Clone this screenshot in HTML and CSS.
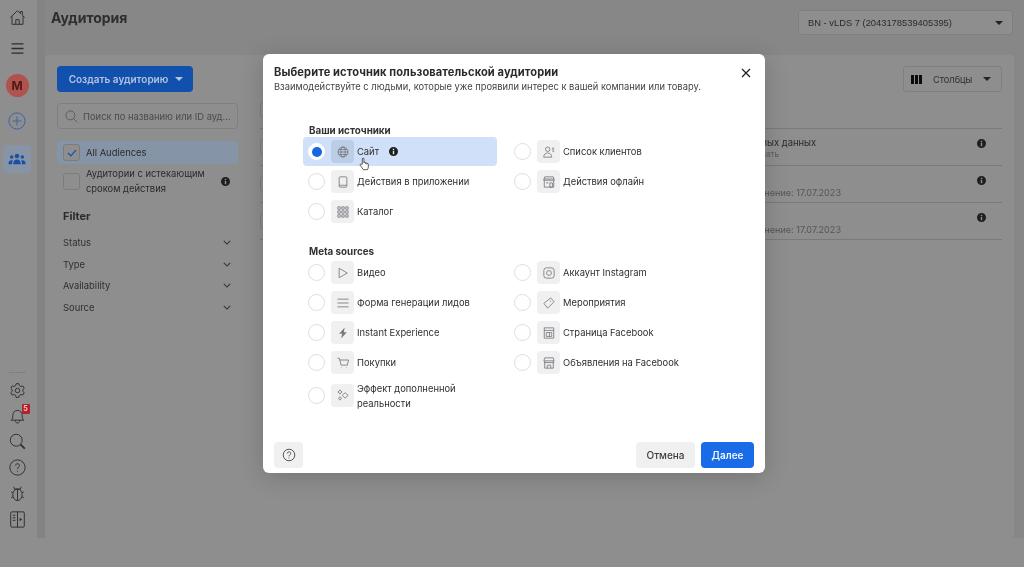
FILE: index.html
```html
<!DOCTYPE html>
<html lang="ru">
<head>
<meta charset="utf-8">
<title>Аудитория</title>
<link rel="stylesheet" href="styles.css">
</head>
<body>
<div class="page">
  <nav class="rail">
    <svg class="rail-icon" viewBox="0 0 20 20"><path d="M1.500 10 10 2l3.500 3.300V3h2.200v4.400L18.500 10M3.500 8.500V18h13V8.500M8 18v-5.500h4V18"/></svg>
    <svg class="rail-icon burger" viewBox="0 0 20 20"><path d="M3 4.500h14M3 10h14M3 15.500h14"/></svg>
    <div class="avatar">M</div>
    <svg class="rail-icon plus" viewBox="0 0 20 20"><circle cx="10" cy="10" r="9"/><path d="M10 5v10M5 10h10"/></svg>
    <div class="rail-tile">
      <svg viewBox="0 0 20 14" class="people"><circle cx="10" cy="3.500" r="2.600"/><circle cx="3.800" cy="4.600" r="2"/><circle cx="16.200" cy="4.600" r="2"/><path d="M5.600 13c0-3.400 1.600-5.400 4.400-5.400s4.400 2 4.400 5.400zM0 13c0-3 1.200-4.600 3.800-4.600.6 0 1 .1 1.400.3C4.400 9.800 4.200 11.200 4.200 13zM20 13c0-3-1.200-4.600-3.800-4.600-.6 0-1 .1-1.400.3.8 1.100 1 2.500 1 4.300z"/></svg>
    </div>
    <div class="rail-bottom">
      <div class="rail-rule"></div>
      <svg class="rail-icon" viewBox="0 0 20 20"><path d="M8.300 2h3.400l.5 2.300 1.700 1 2.300-.7 1.700 2.900-1.700 1.600v1.800l1.700 1.600-1.700 2.900-2.300-.7-1.700 1-.5 2.300H8.300l-.5-2.300-1.700-1-2.300.7-1.700-2.900 1.700-1.600V9.100L2.100 7.500l1.700-2.900 2.300.7 1.700-1z"/><circle cx="10" cy="10" r="2.600"/></svg>
      <div class="bell">
        <svg class="rail-icon" viewBox="0 0 20 20"><path d="M2.500 15.500c1.500-1.200 2-2.500 2-5.500 0-3.600 2.200-6 5.500-6s5.500 2.400 5.500 6c0 3 .5 4.300 2 5.500zM7.500 15.800c0 4 5 4 5 0"/></svg>
        <span class="badge">5</span>
      </div>
      <svg class="rail-icon" viewBox="0 0 20 20"><circle cx="8.500" cy="8.500" r="7"/><path d="m13.500 13.500 5 5" class="thick"/></svg>
      <svg class="rail-icon" viewBox="0 0 20 20"><circle cx="10" cy="10" r="9"/><path d="M7.800 7.800c0-3 4.500-3 4.500 0 0 1.800-2.300 1.800-2.300 4M10 13.800v1"/></svg>
      <svg class="rail-icon" viewBox="0 0 20 20"><ellipse cx="10" cy="11.500" rx="5.500" ry="6.800"/><path d="M10 4.700v13.600M7 5.500 5.500 2M13 5.500 14.500 2M4.500 9 2.500 8M15.500 9l2-1M4.500 14l-2 1M15.500 14l2 1M6.500 4.800h7"/></svg>
      <svg class="rail-icon" viewBox="0 0 20 20"><rect x="2" y="1" width="16" height="18" rx="1.500"/><path d="M10 1v18M4.500 5h3M4.500 8h3M4.500 11h3"/><path class="solid" d="m12.500 8 3 2-3 2z"/></svg>
    </div>
  </nav>
  <div class="gutter"></div>
  <main class="main">
    <header class="top">
      <h1 class="page-title">Аудитория</h1>
      <div class="account">BN - vLDS 7 (2043178539405395)<span class="caret"></span></div>
    </header>
    <section class="card">
      <aside class="filters">
        <div class="create">Создать аудиторию<span class="caret light"></span></div>
        <div class="search">
          <svg viewBox="0 0 14 14" class="search-ico"><circle cx="5.800" cy="5.800" r="4.800"/><path d="m9.300 9.300 4 4"/></svg>
          <span>Поиск по названию или ID ауд...</span>
        </div>
        <div class="check-row selected">
          <span class="box"><svg viewBox="0 0 12 10"><path d="m1 5 3.500 3.500L11 1.500"/></svg></span>
          <span>All Audiences</span>
        </div>
        <div class="check-row expiring">
          <span class="box"></span>
          <span class="grow">Аудитории с истекающим сроком действия</span>
          <svg class="info" viewBox="0 0 10 10"><use href="#info"/></svg>
        </div>
        <h2 class="filter-head">Filter</h2>
        <div class="filter-row">Status<svg class="chev" viewBox="0 0 10 6"><path d="m1 1 4 4 4-4"/></svg></div>
        <div class="filter-row">Type<svg class="chev" viewBox="0 0 10 6"><path d="m1 1 4 4 4-4"/></svg></div>
        <div class="filter-row">Availability<svg class="chev" viewBox="0 0 10 6"><path d="m1 1 4 4 4-4"/></svg></div>
        <div class="filter-row">Source<svg class="chev" viewBox="0 0 10 6"><path d="m1 1 4 4 4-4"/></svg></div>
      </aside>
      <div class="table-side">
        <div class="toolbar">
          <div class="columns">
            <span class="col-bars"><i></i><i></i><i></i></span>
            <span class="col-label">Столбцы</span>
            <span class="caret"></span>
          </div>
        </div>
        <div class="head-row"><span class="tick"></span></div>
        <div class="t-row">
          <span class="tick"></span>
          <div class="t-text first"><b>Ожидание новых данных</b><small>Будет использовать</small></div>
          <svg class="info" viewBox="0 0 10 10"><use href="#info"/></svg>
        </div>
        <div class="t-row">
          <span class="tick"></span>
          <div class="t-text"><b>&nbsp;</b><span>Последнее изменение: 17.07.2023</span></div>
          <svg class="info" viewBox="0 0 10 10"><use href="#info"/></svg>
        </div>
        <div class="t-row">
          <span class="tick"></span>
          <div class="t-text"><b>&nbsp;</b><span>Последнее изменение: 17.07.2023</span></div>
          <svg class="info" viewBox="0 0 10 10"><use href="#info"/></svg>
        </div>
      </div>
    </section>
  </main>
</div>

<div class="modal" role="dialog">
  <header class="modal-head">
    <div>
      <h2 class="modal-title">Выберите источник пользовательской аудитории</h2>
      <p class="modal-sub">Взаимодействуйте с людьми, которые уже проявили интерес к вашей компании или товару.</p>
    </div>
    <svg class="close" viewBox="0 0 10 10"><path d="m1 1 8 8M9 1 1 9"/></svg>
  </header>
  <div class="modal-body">
    <h3 class="group-label">Ваши источники</h3>
    <div class="src-grid">
      <div class="src active">
        <span class="radio on"></span>
        <span class="tile"><svg viewBox="0 0 14 14"><circle cx="7" cy="7" r="5.800"/><ellipse cx="7" cy="7" rx="2.600" ry="5.800"/><path d="M1.200 7h11.600M2.200 4h9.600M2.200 10h9.600"/></svg></span>
        <span class="src-name">Сайт</span>
        <svg class="info" viewBox="0 0 10 10"><use href="#info"/></svg>
        <svg class="hand" viewBox="0 0 12 15"><path d="M3.600 7.800V2c0-1.300 1.800-1.300 1.800 0v4.200c0-1 1.700-1 1.700 0v.8c0-1 1.600-1 1.600 0v.7c0-.8 1.500-.8 1.500.2v2.800c0 1.300-.6 2-1 3H4.800c-.6-1.500-2.400-2.800-3.400-4.700-.6-1.100.6-1.900 1.400-1z"/></svg>
      </div>
      <div class="src">
        <span class="radio"></span>
        <span class="tile"><svg viewBox="0 0 14 14"><circle cx="5.500" cy="3.800" r="2.600"/><path d="M.8 13c0-6.500 9.400-6.500 9.400 0zM10.500 2.500h2.500M10.500 4.500h2.500M11.200 6.500H13"/></svg></span>
        <span class="src-name">Список клиентов</span>
      </div>
      <div class="src">
        <span class="radio"></span>
        <span class="tile"><svg viewBox="0 0 14 14"><rect x="2.500" y="1" width="9" height="12" rx="1.200"/><path d="M2.500 10.800h9"/></svg></span>
        <span class="src-name">Действия в приложении</span>
      </div>
      <div class="src">
        <span class="radio"></span>
        <span class="tile"><svg viewBox="0 0 14 14"><path d="M2 1h10l1.200 4H.8zM1.500 5v8h11V5M1 3.500h12M8 8h3v5H8zM3.500 8h3"/></svg></span>
        <span class="src-name">Действия офлайн</span>
      </div>
      <div class="src">
        <span class="radio"></span>
        <span class="tile"><svg viewBox="0 0 14 14"><path d="M1 1h2.800v2.800H1zM5.600 1h2.800v2.800H5.600zM10.200 1H13v2.800h-2.800zM1 5.600h2.800v2.800H1zM5.600 5.600h2.800v2.800H5.600zM10.200 5.600H13v2.800h-2.800zM1 10.200h2.800V13H1zM5.600 10.200h2.800V13H5.600zM10.200 10.200H13V13h-2.800z"/></svg></span>
        <span class="src-name">Каталог</span>
      </div>
    </div>
    <h3 class="group-label second">Meta sources</h3>
    <div class="src-grid">
      <div class="src">
        <span class="radio"></span>
        <span class="tile"><svg viewBox="0 0 14 14"><path d="M2.500 1.500v11l9.500-5.500z"/></svg></span>
        <span class="src-name">Видео</span>
      </div>
      <div class="src">
        <span class="radio"></span>
        <span class="tile"><svg viewBox="0 0 14 14"><rect x="1" y="1" width="12" height="12" rx="3"/><circle cx="7" cy="7" r="2.800"/><path d="M10.300 3.400v.3"/></svg></span>
        <span class="src-name">Аккаунт Instagram</span>
      </div>
      <div class="src">
        <span class="radio"></span>
        <span class="tile"><svg viewBox="0 0 14 14"><path d="M.5 2.500h13M.5 7h13M.5 11.500h13"/></svg></span>
        <span class="src-name">Форма генерации лидов</span>
      </div>
      <div class="src">
        <span class="radio"></span>
        <span class="tile"><svg viewBox="0 0 14 14"><path d="M9 1 1 7.500 5.500 13 13 5.500zM8 4l1.500 1.500"/></svg></span>
        <span class="src-name">Мероприятия</span>
      </div>
      <div class="src">
        <span class="radio"></span>
        <span class="tile"><svg viewBox="0 0 14 14" class="solid-ico"><path d="M9 .5 2.500 7.800h3.500L4.800 13.500 11.500 6H8z"/></svg></span>
        <span class="src-name">Instant Experience</span>
      </div>
      <div class="src">
        <span class="radio"></span>
        <span class="tile"><svg viewBox="0 0 14 14"><path d="M1.500 1h11v12h-11zM1.500 4h11M3.800 6.500h6.400v4.500H3.800zM7.500 6.500V11"/></svg></span>
        <span class="src-name">Страница Facebook</span>
      </div>
      <div class="src">
        <span class="radio"></span>
        <span class="tile"><svg viewBox="0 0 14 14"><path d="M.5 1.500h2.300l2 8h7.200l1.500-6H3.200M5.200 12.500h.6M11 12.500h.6"/></svg></span>
        <span class="src-name">Покупки</span>
      </div>
      <div class="src">
        <span class="radio"></span>
        <span class="tile"><svg viewBox="0 0 14 14"><path d="M2 1h10l1 3.500H1zM2 4.500V13h10V4.500M1 6.500h12M5 13V9.500h4V13"/></svg></span>
        <span class="src-name">Объявления на Facebook</span>
      </div>
      <div class="src tall">
        <span class="radio"></span>
        <span class="tile"><svg viewBox="0 0 14 14"><path d="M9.500 4.300 13 7.500l-3.500 3.200L6 7.500zM3.500 1l1 1.500L6 3.500 4.500 4.500l-1 1.500-1-1.500L1 3.500l1.500-1zM3.500 9l.8 1.200 1.200.8-1.200.8-.8 1.200-.8-1.200-1.200-.8 1.200-.8z"/></svg></span>
        <span class="src-name">Эффект дополненной реальности</span>
      </div>
    </div>
  </div>
  <footer class="modal-foot">
    <button class="btn square" aria-label="Справка"><svg viewBox="0 0 14 14"><circle cx="7" cy="7" r="5.800"/><path d="M5.300 5.500c0-2.200 3.400-2.200 3.400 0 0 1.300-1.700 1.300-1.700 2.800M7 9.600v.8"/></svg></button>
    <button class="btn cancel">Отмена</button>
    <button class="btn next">Далее</button>
  </footer>
</div>

<svg class="defs" width="0" height="0" aria-hidden="true">
  <symbol id="info" viewBox="0 0 10 10">
    <path fill-rule="evenodd" d="M5 0a5 5 0 1 1 0 10A5 5 0 0 1 5 0zM4.200 2v1.500h1.600V2zM4.200 4.500V8h1.600V4.500z"/>
  </symbol>
</svg>
</body>
</html>
```

FILE: styles.css
```css
* { box-sizing: border-box; }
html, body { margin: 0; height: 100%; }
body {
  width: 1024px;
  height: 567px;
  overflow: hidden;
  position: relative;
  background: #8e8e8e;
  font-family: "Inter", "Liberation Sans", sans-serif;
  color: #2a2a2a;
  font-size: 9.400px;
}
svg { display: block; }
.defs { position: absolute; }

/* Dimmed page behind the dialog */
.page { display: flex; height: 538px; filter: blur(.45px); }

.rail {
  width: 37px;
  height: 100%;
  background: #8e8e8e;
  display: flex;
  flex-direction: column;
  align-items: center;
  padding: 8.500px 3px 0 0;
  flex: none;
}
.rail-icon {
  width: 17px;
  height: 17px;
  fill: none;
  stroke: #2d2d2d;
  stroke-width: 1.100;
  flex: none;
}
.rail-icon .thick { stroke-width: 2; }
.rail-icon .solid { fill: #2d2d2d; stroke: none; }
.burger { margin-top: 14px; stroke-width: 1.500; }
.avatar {
  width: 23px;
  height: 23px;
  margin-top: 17px;
  border-radius: 50%;
  background: #b0524e;
  color: #4d1a18;
  font: 700 12px/23px "Inter", sans-serif;
  text-align: center;
  flex: none;
}
.plus { width: 18px; height: 18px; margin-top: 15.500px; stroke: #3f63a8; }
.rail-tile {
  width: 28px;
  height: 28px;
  margin-top: 15px;
  border-radius: 4px;
  background: #8794a5;
  display: flex;
  align-items: center;
  justify-content: center;
  flex: none;
}
.people { width: 18px; height: 12px; fill: #1a4ea6; }
.rail-bottom {
  margin-top: auto;
  display: flex;
  flex-direction: column;
  align-items: center;
  gap: 8.800px;
  padding-bottom: 10.500px;
}
.rail-rule { width: 17px; height: 1px; background: #7f7f7f; }
.bell { position: relative; }
.badge {
  position: absolute;
  right: -4px;
  top: -3px;
  width: 8px;
  height: 10px;
  background: #b3222a;
  border-radius: 1px;
  color: #e6c9c9;
  font: 700 7px/10px "Inter", sans-serif;
  text-align: center;
}

.gutter { width: 8px; flex: none; background: #838383; }

.main { width: 979px; flex: none; background: #878787; display: flex; flex-direction: column; }
.top {
  height: 55px;
  flex: none;
  display: flex;
  justify-content: space-between;
  align-items: flex-start;
  padding: 9px 11px 0 6px;
}
.page-title { margin: 0; font-size: 14px; line-height: 17px; font-weight: 700; color: #2e2e2e; }
.account {
  width: 215px;
  height: 25px;
  margin-top: 1px;
  background: #8e8e8e;
  border: 1px solid #7f7f7f;
  border-radius: 3px;
  display: flex;
  align-items: center;
  justify-content: space-between;
  padding: 0 9px 0 9px;
  font-family: "Liberation Sans", sans-serif;
  font-size: 9.350px;
  color: #2b2b2b;
}
.caret {
  width: 0;
  height: 0;
  border-left: 4px solid transparent;
  border-right: 4px solid transparent;
  border-top: 4.500px solid #222;
  flex: none;
}
.caret.light { border-top-color: #b6c6df; margin-left: 7px; }

.card {
  width: 969px;
  height: 483px;
  background: #8e8e8e;
  border-radius: 3px;
  display: flex;
  padding: 11px 12px;
}
.filters { width: 181px; flex: none; }
.create {
  width: 136px;
  height: 26px;
  padding-left: 2px;
  border-radius: 4px;
  background: #1250ad;
  color: #b4c4de;
  font-weight: 600;
  font-size: 10px;
  display: flex;
  align-items: center;
  justify-content: center;
}
.search {
  margin-top: 11px;
  height: 26px;
  border: 1px solid #7f7f7f;
  border-radius: 4px;
  display: flex;
  align-items: center;
  gap: 5px;
  padding: 0 7px;
  color: #4b4b4b;
  white-space: nowrap;
}
.search-ico { width: 13px; height: 13px; fill: none; stroke: #5a5a5a; flex: none; }
.check-row { display: flex; align-items: center; gap: 6px; padding: 0 6px; color: #2b2b2b; line-height: 15px; }
.check-row.selected { margin-top: 12px; height: 23px; background: #8594a6; border-radius: 4px; }
.check-row.expiring { margin-top: 2px; height: 30px; }
.expiring .info { margin-right: 2.500px; }
.grow { flex: 1; }
.box {
  width: 17px;
  height: 17px;
  flex: none;
  border: 1px solid #7c7c7c;
  border-radius: 3px;
  background: #8e8e8e;
  display: flex;
  align-items: center;
  justify-content: center;
}
.box svg { width: 10px; height: 8px; fill: none; stroke: #1250ad; stroke-width: 1.500; }
.info { width: 9px; height: 9px; fill: #1e1e1e; flex: none; }
.filter-head { margin: 13px 6px 0; font-size: 11px; line-height: 14px; font-weight: 700; color: #2b2b2b; }
.filter-row {
  display: flex;
  justify-content: space-between;
  align-items: center;
  margin: 0 7px 0 6px;
  height: 21.500px;
  color: #2f2f2f;
}
.filter-head + .filter-row { margin-top: 9px; }
.chev { width: 8px; height: 5px; fill: none; stroke: #333; stroke-width: 1.300; }

.table-side { margin-left: 22px; width: 742px; display: flex; flex-direction: column; }
.toolbar { display: flex; justify-content: flex-end; height: 26px; flex: none; }
.columns {
  width: 99px;
  height: 26px;
  border: 1px solid #7f7f7f;
  border-radius: 3px;
  display: flex;
  align-items: center;
  padding: 0 10px 0 7px;
  color: #2f2f2f;
}
.col-bars { display: flex; gap: 1px; }
.col-bars i { width: 3px; height: 9px; background: #0c0c0c; }
.col-label { flex: 1; margin-left: 11px; font-size: 9.200px; }
.head-row { height: 37px; flex: none; border-bottom: 1px solid #7a7a7a; display: flex; align-items: center; }
.t-row {
  height: 37px;
  flex: none;
  border-bottom: 1px solid #7a7a7a;
  display: flex;
  align-items: flex-start;
  padding-top: 10px;
}
.tick { width: 12px; height: 16px; border: 1px solid #7f7f7f; border-radius: 3px; flex: none; }
.t-text { margin-left: 418px; width: 287px; margin-top: -2px; padding-top: 1px; line-height: 12px; font-size: 9.100px; color: #555; white-space: nowrap; }
.t-text b { display: block; font-weight: 400; color: #2a2a2a; }
.t-text small { display: block; font-size: 8px; color: #5b5b5b; line-height: 11px; }
.t-text.first { padding: 0 0 0 10px; font-size: 9.400px; }

/* Dialog */
.modal {
  position: absolute;
  left: 263px;
  top: 54px;
  width: 502px;
  height: 419px;
  background: #fff;
  border-radius: 6px;
  box-shadow: 0 4px 24px rgba(0, 0, 0, .18);
  display: flex;
  flex-direction: column;
  filter: blur(.35px);
}
.modal-head { display: flex; justify-content: space-between; padding: 11px 14px 0 11px; height: 49px; flex: none; }
.modal-title { margin: 0; font-size: 11.100px; line-height: 15px; font-weight: 700; color: #2a2a2a; letter-spacing: .1px; }
.modal-sub { margin: 0; font-size: 9.350px; line-height: 14px; color: #444; }
.close { width: 10px; height: 10px; margin-top: 3px; fill: none; stroke: #222; stroke-width: 1.300; }
.modal-body { flex: 1; padding: 21px 0 0 40px; }
.group-label { margin: 0; padding-left: 6px; font-size: 9.800px; line-height: 14px; font-weight: 700; color: #333; }
.group-label.second { margin-top: 18px; }
.src-grid { display: grid; grid-template-columns: 206px 205px; grid-auto-rows: 30px; margin-top: -1px; }
.src { display: flex; align-items: center; height: 29px; padding-left: 5px; border-radius: 4px; color: #2e2e2e; position: relative; }
.src.tall { height: 34px; }
.src.active { width: 194px; background: #cfe0f8; }
.radio { width: 17px; height: 17px; flex: none; border: 1px solid #dedede; border-radius: 50%; background: #fff; position: relative; }
.radio.on { border-color: #fff; }
.radio.on::after { content: ""; position: absolute; inset: 2.500px; border-radius: 50%; background: #1866e0; }
.tile { width: 23px; height: 23px; margin-left: 6px; flex: none; border-radius: 4px; background: #f0f0f0; display: flex; align-items: center; justify-content: center; }
.active .tile { background: #bccde6; }
.tile svg { width: 12px; height: 12px; fill: none; stroke: #777b82; stroke-width: 1; }
.tile svg.solid-ico { fill: #777b82; stroke: none; }
.src-name { margin-left: 3px; font-size: 9.400px; line-height: 15px; }
.tall .src-name { margin-top: 2px; }
.src .info { margin-left: 10px; }
.hand { position: absolute; left: 56px; top: 20px; width: 11px; height: 14px; fill: #fff; stroke: #222; stroke-width: .8; }
.modal-foot { display: flex; align-items: center; height: 26px; margin-bottom: 5px; padding: 0 11px; gap: 6px; flex: none; }
.btn { height: 26px; border: 0; border-radius: 4px; font: 600 10px "Inter", sans-serif; padding: 0; }
.square { width: 29px; background: #f0f0f0; display: flex; align-items: center; justify-content: center; margin-right: auto; }
.square svg { width: 14px; height: 14px; fill: none; stroke: #444; stroke-width: .9; }
.cancel { width: 59px; background: #f0f0f0; color: #3c3c3c; font-weight: 500; }
.next { width: 53px; background: #1a6be8; color: #f2f6fd; }
```
